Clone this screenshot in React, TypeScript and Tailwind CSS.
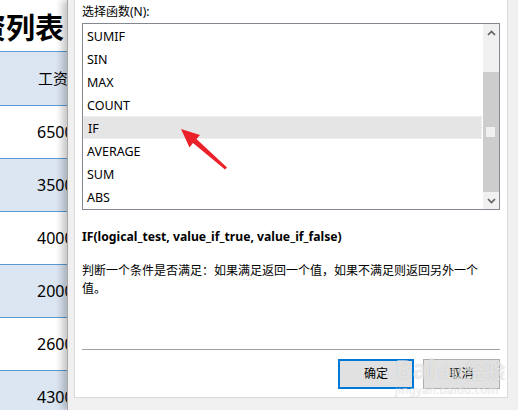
import React from 'react';

const FUNCS = ['SUMIF', 'SIN', 'MAX', 'COUNT', 'IF', 'AVERAGE', 'SUM', 'ABS'];
const SALARIES = ['6500', '3500', '4000', '2000', '2600', '4300'];

function SheetBehind() {
  return (
    <div className="w-[67px] shrink-0 flex flex-col overflow-hidden text-black">
      <div className="h-[52px] shrink-0 flex items-center justify-end pr-[3px] pt-[3px] border-b border-[#5b9bd5] whitespace-nowrap">
        <span className="text-[29px] font-bold leading-none">工资列表</span>
      </div>
      <div className="h-[54px] shrink-0 flex items-center pl-[38px] bg-[#dce6f2] border-b border-[#5b9bd5] whitespace-nowrap text-[15px]">
        工资
      </div>
      {SALARIES.map((s, i) => (
        <div
          key={s + i}
          className={`h-[53px] shrink-0 flex items-center pl-[37px] border-b border-[#5b9bd5] whitespace-nowrap text-[16px] ${
            i % 2 === 1 ? 'bg-[#dce6f2]' : 'bg-white'
          }`}
        >
          {s}
        </div>
      ))}
    </div>
  );
}

function FunctionList() {
  return (
    <div className="h-[187px] shrink-0 border border-[#828790] bg-white flex">
      <div className="flex-1 flex flex-col pr-[1px]">
        {FUNCS.map(f => (
          <div
            key={f}
            className={`h-[23px] shrink-0 flex items-center pt-[3px] pl-[4px] text-[12.5px] ${
              f === 'IF' ? 'bg-[#e5e5e5] border border-dotted border-[#f8f8f8] pl-[3px]' : ''
            }`}
          >
            {f}
          </div>
        ))}
      </div>
      {/* scrollbar */}
      <div className="w-[16px] flex flex-col bg-[#f0f0f0]">
        <div className="h-[17px] flex items-center justify-center">
          <svg width="9" height="6" viewBox="0 0 9 6">
            <polyline points="1,5 4.5,1.5 8,5" fill="none" stroke="#606060" strokeWidth="1.6" />
          </svg>
        </div>
        <div className="h-[31px]" />
        <div className="h-[120px] bg-[#cdcdcd] relative">
          <div className="absolute left-[3px] top-[55px] w-[9px] h-[10px] bg-[#f0f0f0]" />
        </div>
        <div className="flex-1 flex items-center justify-center">
          <svg width="9" height="6" viewBox="0 0 9 6">
            <polyline points="1,1 4.5,4.5 8,1" fill="none" stroke="#606060" strokeWidth="1.6" />
          </svg>
        </div>
      </div>
    </div>
  );
}

export default function App() {
  return (
    <div className="w-[518px] h-[410px] flex overflow-hidden relative bg-white font-['Noto_Sans','Noto_Sans_CJK_SC',sans-serif]">
      <SheetBehind />

      {/* dialog */}
      <div className="flex-1 flex flex-col bg-[#f0f0f0] border-l border-[#a8a8a8] shadow-[-5px_0_7px_rgba(0,0,0,0.22)] pl-[6px] pr-[10px] pb-[12px] z-10">
        <div className="flex-1 flex flex-col bg-white border border-t-0 border-[#dadada] px-[7px] text-[12px] text-black">
          <div className="pt-[4px] h-[23px] shrink-0 leading-[16px]">选择函数(N):</div>
          <FunctionList />
          <div className="mt-[18px] h-[18px] leading-[18px] font-bold text-[12.2px]">
            IF(logical_test, value_if_true, value_if_false)
          </div>
          <p className="mt-[16px] max-w-[400px] leading-[18px]">
            判断一个条件是否满足：如果满足返回一个值，如果不满足则返回另外一个值。
          </p>
          <div className="mt-auto border-t border-[#a0a0a0] mb-[9px]" />
          <div className="flex justify-end gap-[9px] mb-[8px]">
            <button className="w-[76px] h-[30px] border-2 border-[#0078d7] bg-[#e1e1e1] text-[12px]">确定</button>
            <button className="w-[77px] h-[30px] border border-[#adadad] bg-[#e1e1e1] text-[12px]">取消</button>
          </div>
        </div>
      </div>

      {/* red annotation arrow */}
      <svg className="absolute left-0 top-0 z-20 pointer-events-none" width="518" height="410">
        <polygon
          points="181,129 200,135 196.5,139 227,167.5 225,169.5 193,143 189.5,147.5"
          fill="#ea2128"
        />
      </svg>

      {/* watermark */}
      <div className="absolute left-[395px] top-[356px] z-20 flex flex-col items-start pointer-events-none text-white/60 [text-shadow:0_0_1px_rgba(0,0,0,0.2)]">
        <div className="flex items-end gap-[2px] leading-none">
          <span className="text-[26px] font-bold">Bai</span>
          <span className="text-[20px] font-bold">du</span>
          <span className="text-[20px] font-bold">经验</span>
        </div>
        <span className="text-[11px] leading-none mt-[2px] tracking-[0.5px]">jingyan.baidu.com</span>
      </div>
    </div>
  );
}
